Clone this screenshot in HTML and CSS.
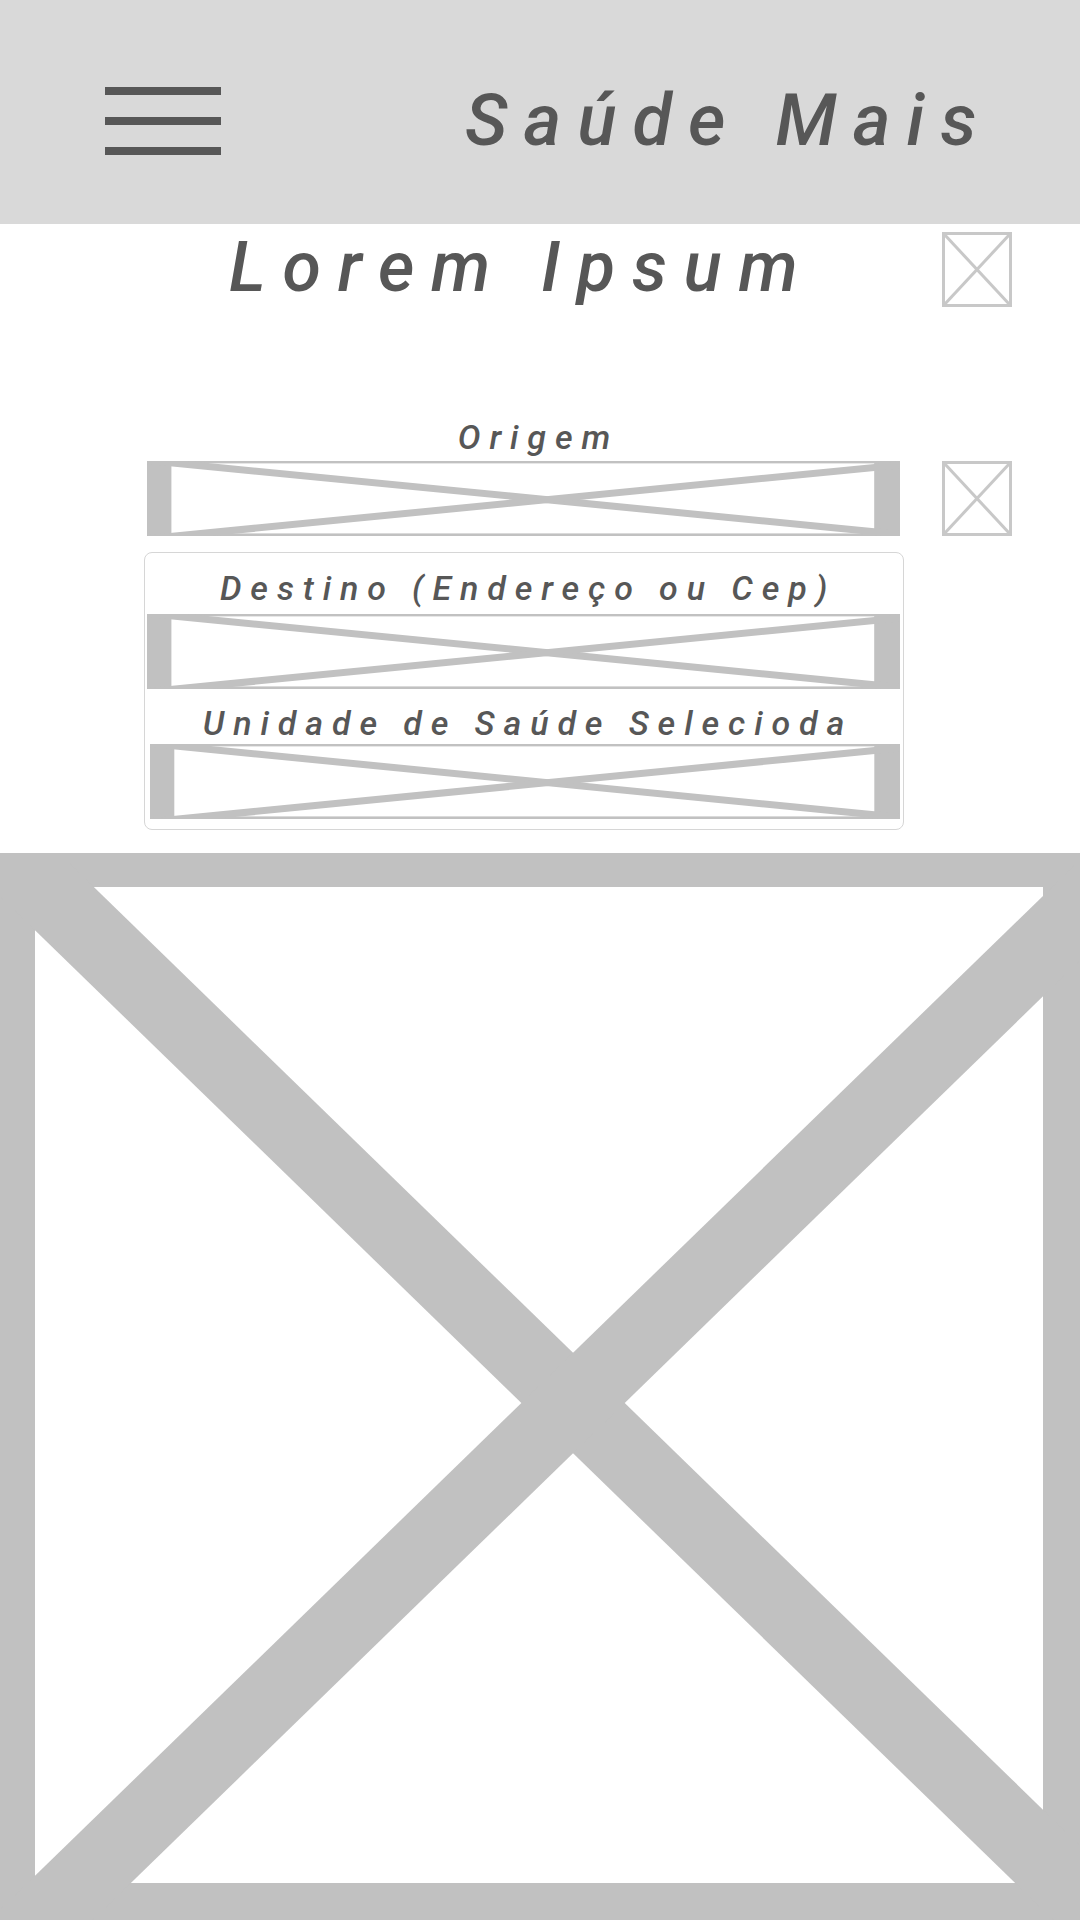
FILE: index.html
```html
<!DOCTYPE html>
<html lang="pt">
<head>
<meta charset="utf-8">
<title>Saúde Mais</title>
<link rel="stylesheet" href="styles.css">
</head>
<body>
<header class="topbar">
  <div class="menu"><span></span><span></span><span></span></div>
  <div class="brand">Saúde Mais</div>
</header>
<main class="content">
  <div class="title-row">
    <h1 class="title">Lorem Ipsum</h1>
    <div class="icon-box">
      <svg viewBox="0 0 70 75" preserveAspectRatio="none"><rect x="1.5" y="1.5" width="67" height="72" fill="none" stroke="#c8c8c8" stroke-width="3"/><line x1="2" y1="2" x2="68" y2="73" stroke="#c8c8c8" stroke-width="3"/><line x1="68" y1="2" x2="2" y2="73" stroke="#c8c8c8" stroke-width="3"/></svg>
    </div>
  </div>
  <div class="form">
    <div class="field-label origin-label">Origem</div>
    <div class="field-row">
      <div class="ph-input">
        <svg viewBox="0 0 1080 1067" preserveAspectRatio="none"><rect width="1080" height="1067" fill="#c1c1c1"/><rect x="35" y="34" width="1008" height="996" fill="#fff"/><line x1="0" y1="-7" x2="1146" y2="1107" stroke="#c1c1c1" stroke-width="72"/><line x1="1146" y1="-7" x2="0" y2="1107" stroke="#c1c1c1" stroke-width="72"/></svg>
      </div>
      <div class="icon-box">
        <svg viewBox="0 0 70 75" preserveAspectRatio="none"><rect x="1.5" y="1.5" width="67" height="72" fill="none" stroke="#c8c8c8" stroke-width="3"/><line x1="2" y1="2" x2="68" y2="73" stroke="#c8c8c8" stroke-width="3"/><line x1="68" y1="2" x2="2" y2="73" stroke="#c8c8c8" stroke-width="3"/></svg>
      </div>
    </div>
    <div class="group">
      <div class="field-label">Destino (Endereço ou Cep)</div>
      <div class="ph-input dest">
        <svg viewBox="0 0 1080 1067" preserveAspectRatio="none"><rect width="1080" height="1067" fill="#c1c1c1"/><rect x="35" y="34" width="1008" height="996" fill="#fff"/><line x1="0" y1="-7" x2="1146" y2="1107" stroke="#c1c1c1" stroke-width="72"/><line x1="1146" y1="-7" x2="0" y2="1107" stroke="#c1c1c1" stroke-width="72"/></svg>
      </div>
      <div class="field-label unit-label">Unidade de Saúde Selecioda</div>
      <div class="ph-input unit">
        <svg viewBox="0 0 1080 1067" preserveAspectRatio="none"><rect width="1080" height="1067" fill="#c1c1c1"/><rect x="35" y="34" width="1008" height="996" fill="#fff"/><line x1="0" y1="-7" x2="1146" y2="1107" stroke="#c1c1c1" stroke-width="72"/><line x1="1146" y1="-7" x2="0" y2="1107" stroke="#c1c1c1" stroke-width="72"/></svg>
      </div>
    </div>
  </div>
  <div class="hero">
    <svg viewBox="0 0 1080 1067" preserveAspectRatio="none"><rect width="1080" height="1067" fill="#c1c1c1"/><rect x="35" y="34" width="1008" height="996" fill="#fff"/><line x1="0" y1="-7" x2="1146" y2="1107" stroke="#c1c1c1" stroke-width="72"/><line x1="1146" y1="-7" x2="0" y2="1107" stroke="#c1c1c1" stroke-width="72"/></svg>
  </div>
</main>
</body>
</html>
```

FILE: styles.css
```css
html, body {
  margin: 0;
  padding: 0;
  background: #ffffff;
}

body {
  width: 1080px;
  height: 1920px;
  overflow: hidden;
  font-family: Roboto, "Noto Sans", "DejaVu Sans", sans-serif;
  color: #575757;
}

svg {
  display: block;
  width: 100%;
  height: 100%;
}

/* Header */
.topbar {
  box-sizing: border-box;
  height: 224px;
  background: #d9d9d9;
  display: flex;
  align-items: flex-start;
  padding: 85px 0 0 105px;
}

.menu {
  width: 116px;
  display: flex;
  flex-direction: column;
  gap: 22px;
  margin-top: 2px;
}

.menu span {
  display: block;
  height: 8px;
  background: #575757;
}

.brand {
  margin-left: 244px;
  font-size: 72px;
  line-height: 72px;
  font-style: italic;
  font-weight: 500;
  letter-spacing: 16.2px;
  white-space: nowrap;
}

/* Title row */
.title-row {
  display: flex;
  align-items: flex-start;
  padding-top: 8px;
}

.title {
  margin: 0 0 0 229px;
  font-size: 70px;
  line-height: 70px;
  font-style: italic;
  font-weight: 500;
  letter-spacing: 16.8px;
  white-space: nowrap;
}

.icon-box {
  width: 70px;
  height: 75px;
  flex: none;
}

.title-row .icon-box {
  margin-left: auto;
  margin-right: 68px;
}

/* Form */
.form {
  padding-left: 144px;
}

.field-label {
  font-size: 34px;
  line-height: 34px;
  font-style: italic;
  font-weight: 500;
  letter-spacing: 8.9px;
  text-align: center;
  white-space: nowrap;
  padding-left: 8px;
}

.origin-label {
  width: 753px;
  margin: 113px 0 0 3px;
  padding-left: 30px;
  box-sizing: border-box;
}

.field-row {
  display: flex;
  gap: 42px;
  margin: 7px 0 0 3px;
}

.ph-input {
  width: 753px;
  height: 75px;
  flex: none;
}

.group {
  box-sizing: border-box;
  width: 760px;
  margin-top: 16px;
  border: 1px solid #d6d6d6;
  border-radius: 8px;
  padding: 18px 0 10px 0;
}

.ph-input.dest {
  margin: 9px 0 0 2px;
}

.unit-label {
  margin-top: 17px;
}

.ph-input.unit {
  width: 750px;
  margin: 4px 0 0 5px;
}

/* Big picture */
.hero {
  width: 1080px;
  height: 1067px;
  margin-top: 23px;
}
```
